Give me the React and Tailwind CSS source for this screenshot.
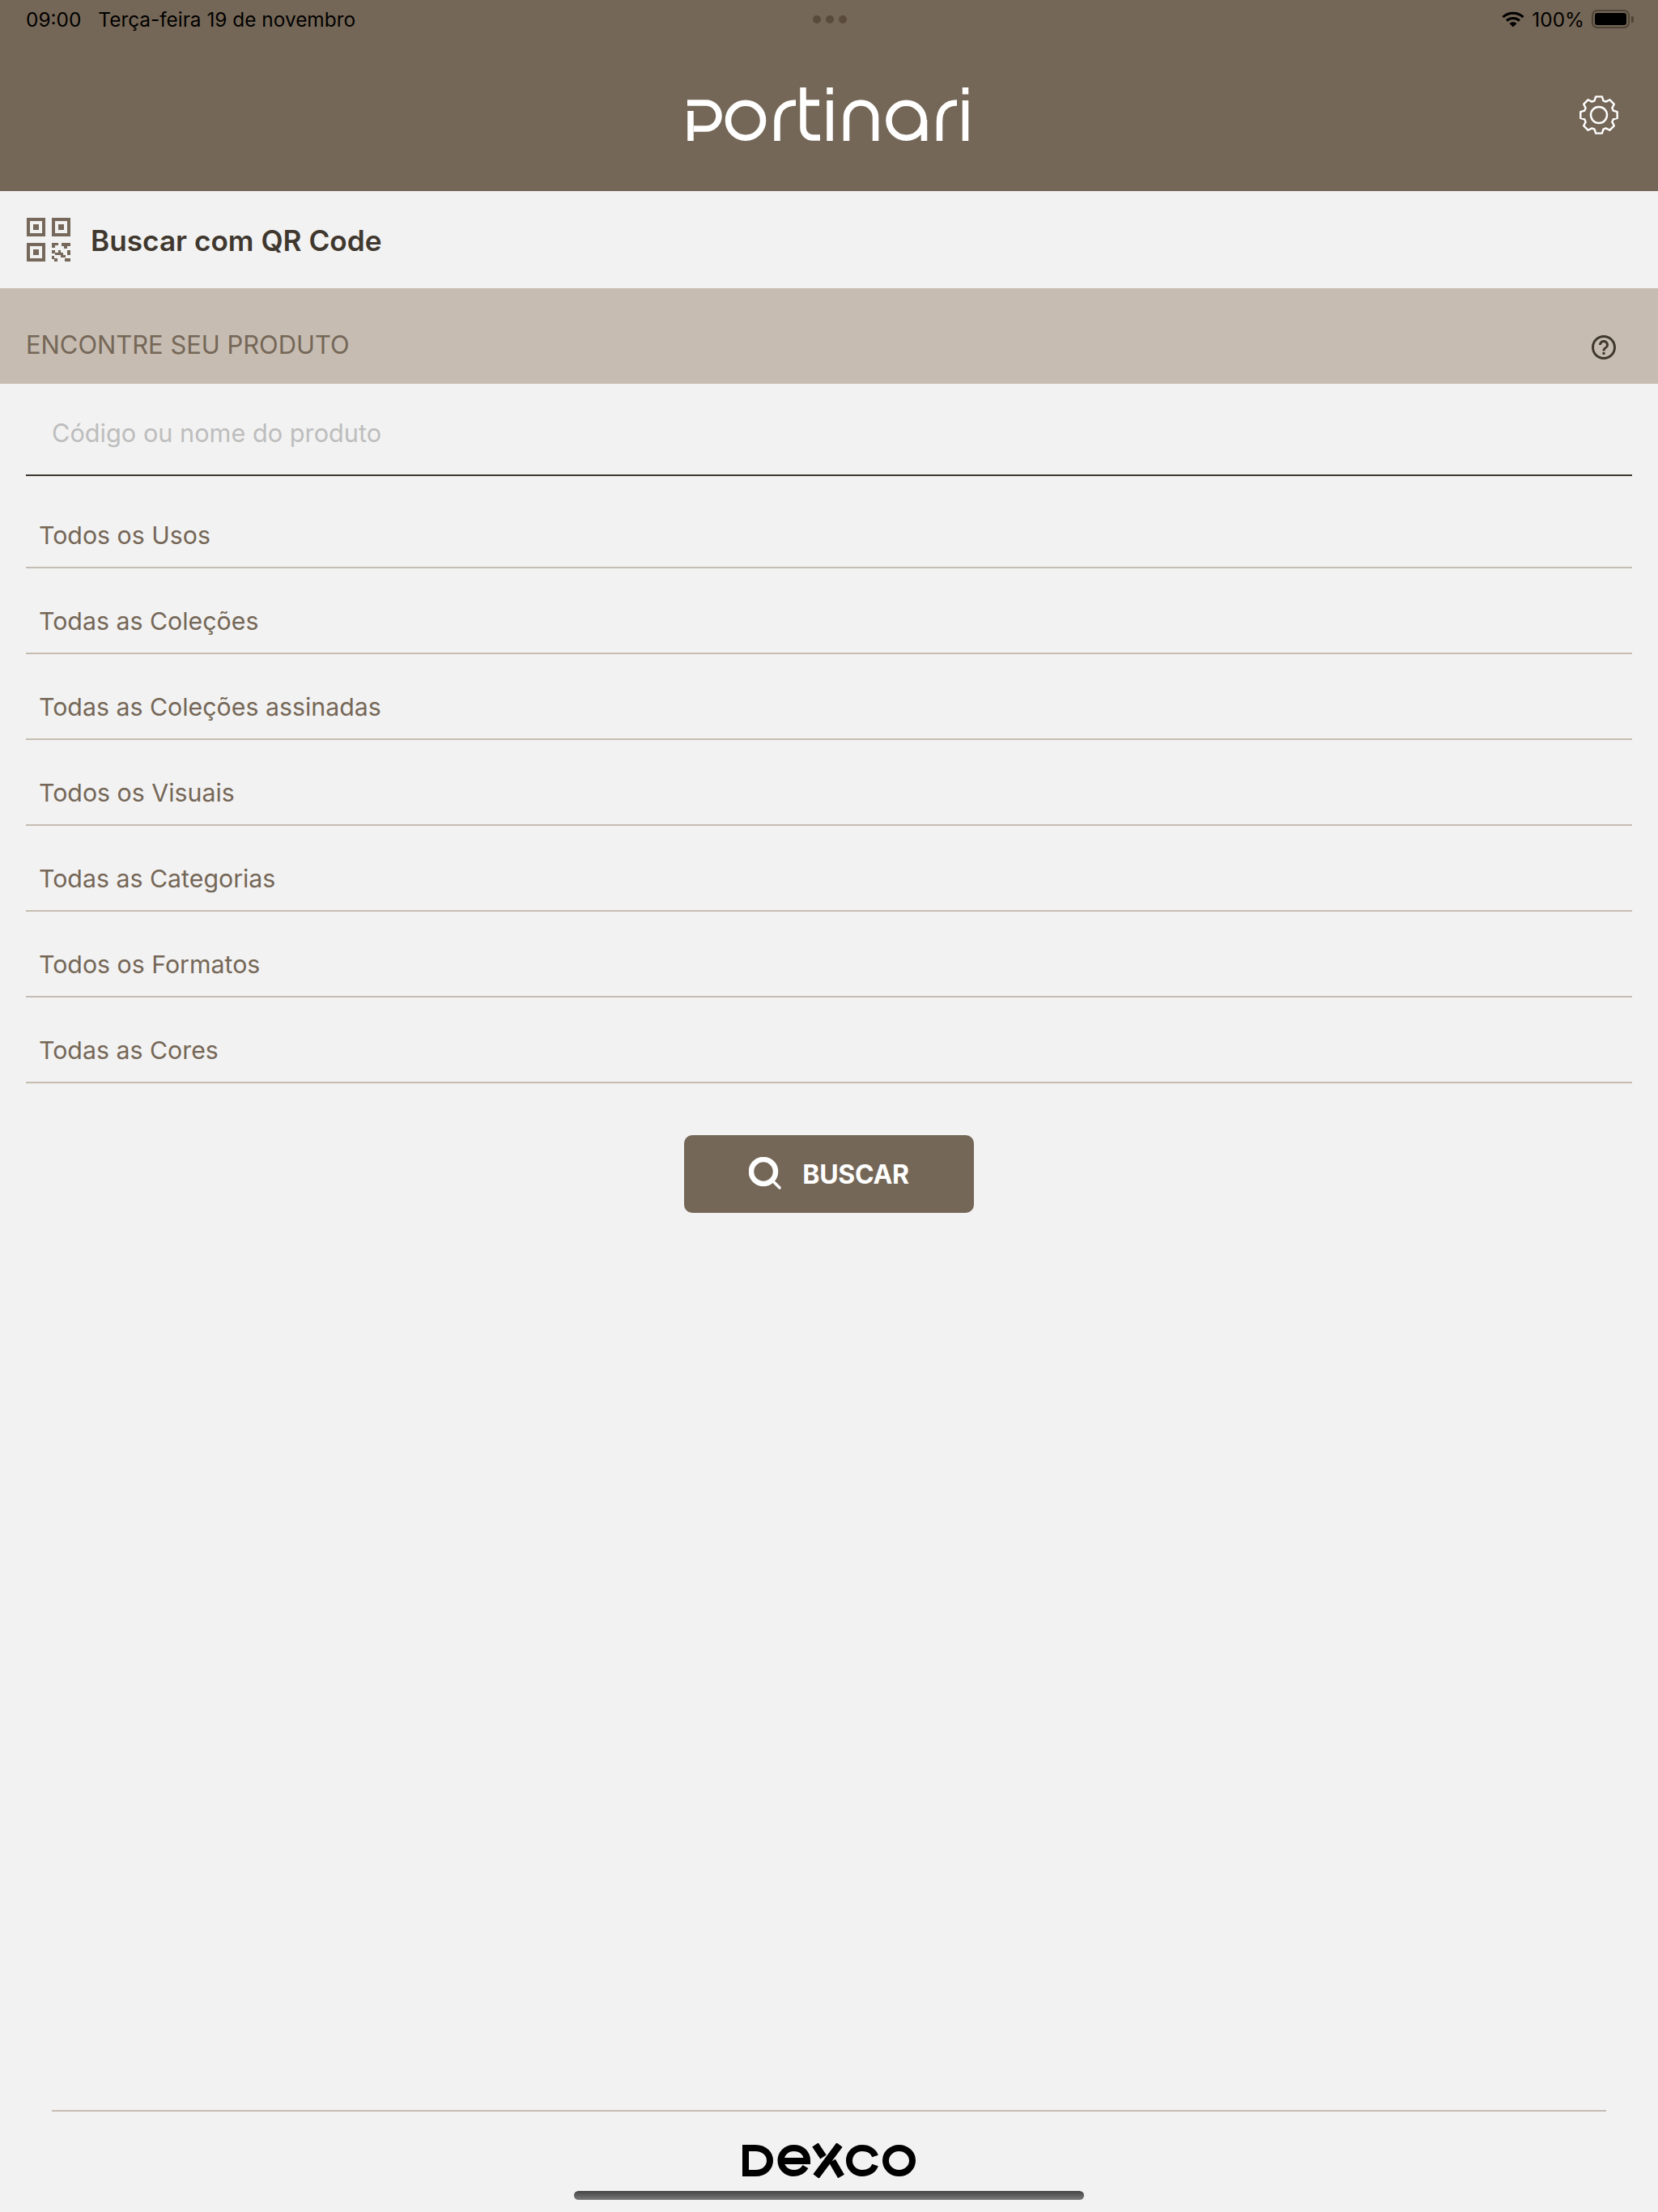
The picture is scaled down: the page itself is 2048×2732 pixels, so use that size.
import React from 'react';
import { MdHelpOutline } from 'react-icons/md';

const filters = [
    'Todos os Usos',
    'Todas as Coleções',
    'Todas as Coleções assinadas',
    'Todos os Visuais',
    'Todas as Categorias',
    'Todos os Formatos',
    'Todas as Cores',
];

const PortinariLogo = () => (
    <svg viewBox="848 106 352 70" className="w-[352px] h-[70px]" fill="none" stroke="#fff" strokeWidth="7.500" role="img" aria-label="Portinari">
        {/* p */}
        <path d="M849 127H872A16 16 0 0 1 872 159H857M853 137V174" />
        {/* o */}
        <circle cx="921" cy="148.7" r="21.500" />
        {/* r */}
        <path d="M960 174V150C960 136 968 127 983 127" />
        {/* t */}
        <path d="M992 108V158A12 12 0 0 0 1004 170H1013M992 127H1012" />
        {/* i */}
        <path d="M1025 124V174M1025 108V116.500" />
        {/* n */}
        <path d="M1045.5 174V145A18 18 0 0 1 1081.5 145V174" />
        {/* a */}
        <circle cx="1119.5" cy="148.7" r="21.500" />
        <path d="M1141.5 148V174" />
        {/* r */}
        <path d="M1160.500 174V150C1160.500 136 1168 127 1182 127" />
        {/* i */}
        <path d="M1192.500 124V174M1192.500 108V116.500" />
    </svg>
);

const DexcoLogo = () => (
    <svg viewBox="915 2646 218 43" className="w-[218px] h-[43px]" fill="none" stroke="#000" strokeWidth="8" role="img" aria-label="Dexco">
        <path d="M921 2652H933C945 2652 951 2660 951 2667.5C951 2675 945 2683 933 2683H921Z" />
        <path d="M965 2668H997C997 2658 990 2652 980.5 2652C971 2652 964.5 2659 964.5 2667.5C964.5 2676 971 2683 980.5 2683C987 2683 992 2680 995 2675" />
        <path d="M1037 2648L1008 2687M1007 2648L1017 2663M1028 2668L1039 2687" strokeWidth="9" />
        <path d="M1081 2662C1079 2656 1073 2652 1065 2652C1055.500 2652 1049 2659 1049 2667.5C1049 2676 1055.500 2683 1065 2683C1073 2683 1079 2679 1081 2673" />
        <ellipse cx="1110.5" cy="2667.5" rx="16.5" ry="15.5" />
    </svg>
);

// 8 teeth gear, top tooth straight up
const gearPath = () => {
    const pts = [];
    for (let i = 0; i < 8; i++) {
        const a = (i * Math.PI) / 4 - Math.PI / 2;
        const step = 0.17;
        [[18.5, -0.3], [23, -step], [23, step], [18.5, 0.3]].forEach(([r, d]) => {
            pts.push(`${(r * Math.cos(a + d)).toFixed(2)} ${(r * Math.sin(a + d)).toFixed(2)}`);
        });
    }
    return `M${pts.join('L')}Z`;
};

const GearIcon = () => (
    <svg viewBox="-26 -26 52 52" className="w-[52px] h-[52px]" fill="none" stroke="#fff" strokeWidth="2.4" strokeLinejoin="round">
        <path d={gearPath()} />
        <circle r="10" />
    </svg>
);

const QrIcon = () => (
    <svg viewBox="33 269 54 54" className="w-[54px] h-[54px]" fill="#76685a">
        <path fillRule="evenodd" d="M33 269h23v23H33zM37 273v15h15v-15zM64 269h23v23H64zM68 273v15h15v-15zM33 300h23v23H33zM37 304v15h15v-15z" />
        <rect x="41" y="277" width="7" height="7" />
        <rect x="72" y="277" width="7" height="7" />
        <rect x="41" y="308" width="7" height="7" />
        <path d="M64 300h8v3h-4v3h-4zM76 300h11v4h-4v3h-4v-3h-3zM64 309h4v3h4v-3h3v6h-7v-2h-4zM75 312h3v3h3v3h-6zM83 309h4v6h-4zM64 316h3v3h4v4h-4v-3h-3zM80 319h7v4h-7z" />
    </svg>
);

const WifiIcon = () => (
    <svg viewBox="0 0 28 20" className="w-[28px] h-[20px]" fill="none" stroke="#000" strokeWidth="3.2">
        <path d="M1.5 7.2C8.500 0.600 19.500 0.600 26.500 7.200" />
        <path d="M6 11.500C10.500 7.500 17.500 7.500 22 11.500" />
        <path d="M14 19.500L9.500 15C12 12.800 16 12.800 18.500 15Z" fill="#000" stroke="none" />
    </svg>
);

const BatteryIcon = () => (
    <div className="flex items-center gap-[2px]">
        <div className="w-[47px] h-[23px] rounded-[7px] border-2 border-[#4d4336] p-[2px]">
            <div className="w-full h-full rounded-[3px] bg-black"></div>
        </div>
        <div className="w-[3px] h-[8px] rounded-r-[2px] bg-[#4d4336]"></div>
    </div>
);

const SearchIcon = () => (
    <svg viewBox="0 0 42 42" className="w-[42px] h-[42px]" fill="none" stroke="#fff">
        <circle cx="18" cy="18" r="15" strokeWidth="6.500" />
        <path d="M30 30L38 38" strokeWidth="3.500" strokeLinecap="round" />
    </svg>
);

export default function App() {
    return (
        <div className="relative h-[2732px] flex flex-col bg-[#f2f2f2] font-['Inter',sans-serif] overflow-hidden">
            {/* Header */}
            <header className="h-[236px] bg-[#756757] shrink-0">
                <div className="h-[48px] pl-[32px] pr-[30px] grid grid-cols-[1fr_auto_1fr] items-center text-[24.4px] text-black">
                    <div className="flex gap-[21px]">
                        <span>09:00</span>
                        <span>Terça-feira 19 de novembro</span>
                    </div>
                    <div className="flex gap-[6px]">
                        <span className="w-[10px] h-[10px] rounded-full bg-[#594a3a]"></span>
                        <span className="w-[10px] h-[10px] rounded-full bg-[#594a3a]"></span>
                        <span className="w-[10px] h-[10px] rounded-full bg-[#594a3a]"></span>
                    </div>
                    <div className="flex justify-end items-center gap-[9px]">
                        <WifiIcon />
                        <span>100%</span>
                        <BatteryIcon />
                    </div>
                </div>
                <div className="relative h-[188px] flex justify-center pt-[58px]">
                    <PortinariLogo />
                    <div className="absolute right-[47px] top-[68px]">
                        <GearIcon />
                    </div>
                </div>
            </header>

            {/* QR code */}
            <div className="h-[120px] shrink-0 flex items-center gap-[25px] px-[33px]">
                <QrIcon />
                <span className="text-[35.2px] font-semibold text-[#40382f] pt-[2px]">Buscar com QR Code</span>
            </div>

            {/* Search form */}
            <div className="h-[118px] shrink-0 bg-[#c6bcb2] flex items-center justify-between pl-[32px] pr-[49px] pt-[22px]">
                <h2 className="text-[30.9px] text-[#756757]">ENCONTRE SEU PRODUTO</h2>
                <MdHelpOutline className="w-[36px] h-[36px] text-[#40382f] mt-[6px]" />
            </div>

            <div className="mx-[32px] h-[114px] shrink-0 border-b-2 border-[#40382f] flex">
                <input
                    placeholder="Código ou nome do produto"
                    className="w-full pl-[32px] pt-[11px] bg-transparent text-[30.7px] text-[#756757] placeholder:text-[#bdbdbd] outline-none"
                />
            </div>

            <div className="pt-[8px]">
                {filters.map((item) => (
                    <div key={item} className="mx-[32px] h-[106px] border-b-2 border-[#c6bcb2] flex items-end pl-[16px] pb-[16px] text-[30.3px] text-[#756757]">
                        {item}
                    </div>
                ))}
            </div>

            <div className="flex justify-center pt-[64px]">
                <button className="w-[358px] h-[96px] rounded-[10px] bg-[#756757] flex items-center justify-center gap-[24px] text-white text-[32px] font-bold tracking-[-0.3px]">
                    <SearchIcon />
                    <span className="pt-[2px]">BUSCAR</span>
                </button>
            </div>

            {/* Footer */}
            <footer className="mt-auto mx-[64px] h-[126px] border-t-2 border-[#c6bcb2] flex justify-center pt-[39px]">
                <DexcoLogo />
            </footer>

            {/* Home indicator */}
            <div className="absolute left-[709px] bottom-[15px] w-[630px] h-[11px] rounded-full bg-gradient-to-b from-[#444] to-[#7a7a7a]"></div>
        </div>
    );
}
